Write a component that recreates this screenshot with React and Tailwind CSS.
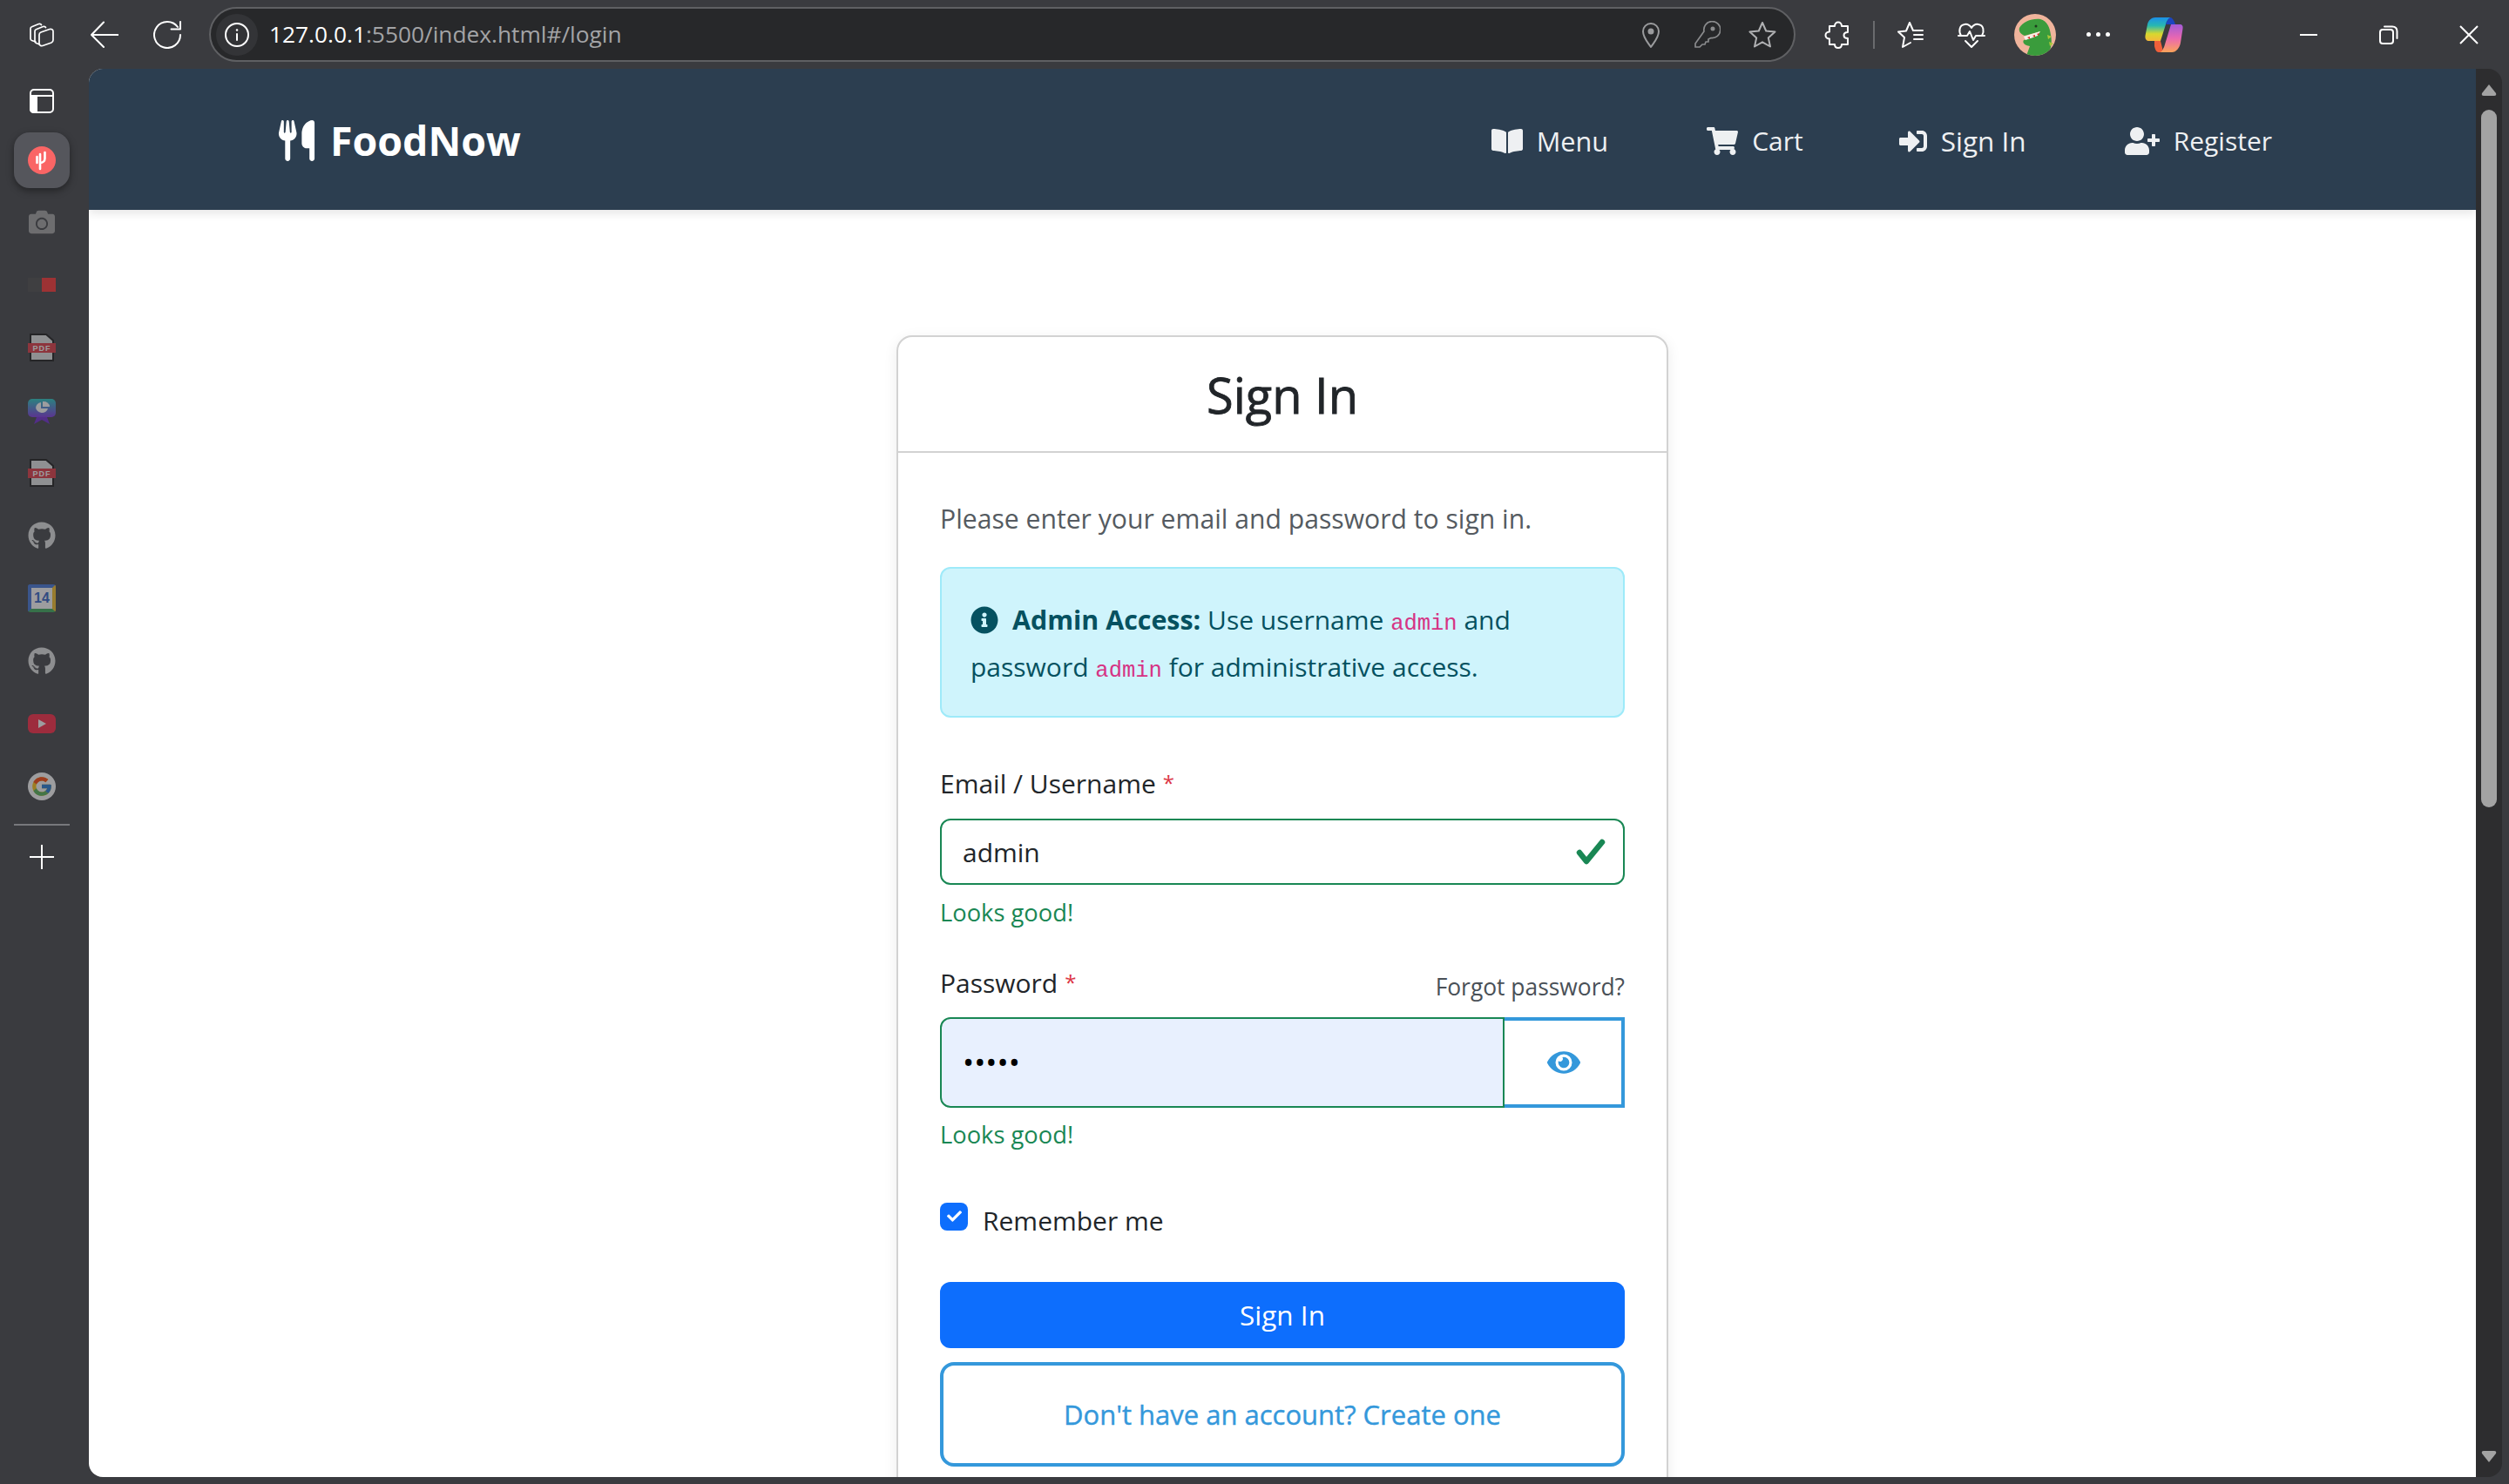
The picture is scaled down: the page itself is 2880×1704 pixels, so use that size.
import {
  FaBookOpen, FaCamera, FaCheck, FaEye, FaGithub, FaInfoCircle, FaShoppingCart,
  FaSignInAlt, FaUserPlus,
} from 'react-icons/fa'
import { FaUtensils } from 'react-icons/fa6'
import { FcGoogle } from 'react-icons/fc'

const Line = ({ size = 32, box = 32, children, className = '' }) => (
  <svg
    width={size}
    height={size}
    viewBox={`0 0 ${box} ${box}`}
    fill="none"
    stroke="currentColor"
    strokeWidth="2"
    strokeLinecap="round"
    strokeLinejoin="round"
    className={className}
  >
    {children}
  </svg>
)

const Cell = ({ className = '', children }) => (
  <div className={`flex h-[64px] w-[64px] shrink-0 items-center justify-center ${className}`}>{children}</div>
)

const Copilot = () => (
  <svg width="44" height="42" viewBox="0 0 44 42">
    <defs>
      <linearGradient id="cpLeft" x1="0" y1="0" x2="0" y2="1">
        <stop offset="0" stopColor="#1b8fe8" />
        <stop offset="0.35" stopColor="#28b8b0" />
        <stop offset="0.7" stopColor="#d8d82e" />
        <stop offset="1" stopColor="#f5b83a" />
      </linearGradient>
      <linearGradient id="cpRight" x1="0" y1="0" x2="0" y2="1">
        <stop offset="0" stopColor="#a35bd8" />
        <stop offset="0.5" stopColor="#ea68b0" />
        <stop offset="1" stopColor="#fba45a" />
      </linearGradient>
    </defs>
    <path d="M12 1 H30 C27 2 25 5 24 9 L18 28 H5 C2 28 0 26 0.5 22 L3 9 C4 4 8 1 12 1 Z" fill="url(#cpLeft)" />
    <path d="M30 1 C33 3 34 6 35 9 L28 9 L24 9 C25 5 27 2 30 1 Z" fill="#1c44c0" />
    <path d="M30 9 H40 C43 9 44 11 43.5 14 L41 30 C40 36 36 41 31 41 H16 C20 40 22 36 23 32 Z" fill="url(#cpRight)" />
    <path d="M11 28 H18 L20 36 C21 39 19 41 16 41 C13 41 12 38 11 34 Z" fill="#f0603a" />
  </svg>
)

const Dino = () => (
  <div className="h-[48px] w-[48px] shrink-0 overflow-hidden rounded-full bg-[#f0b49c]">
    <svg width="48" height="48" viewBox="0 0 48 48">
      <path d="M6 16 C10 9 20 5 30 6 C38 8 41 16 42 24 C44 33 42 42 38 48 H14 L18 37 C12 36 9 33 11 30 L22 27 L30 20 L12 25 C7 23 5 20 6 16 Z" fill="#3a9c3c" />
      <path d="M11 26 L30 20 L27 25 L13 30 Z" fill="#f6f0e8" />
      <path d="M15 27 l3 -1 l0 3 Z M21 25 l3 -1 l0 3 Z M26 23 l3 -1 l-1 3 Z" fill="#d8322a" />
      <circle cx="25" cy="14" r="1.5" fill="#1d3a1e" />
      <path d="M38 24 l5 2 l-4 3 Z M40 32 l5 2 l-4 3 Z" fill="#a8c83a" />
    </svg>
  </div>
)

const Toolbar = () => (
  <div className="flex h-[79px] shrink-0 items-center text-white">
    <div className="ml-[12px] flex">
      <div className="flex h-[64px] w-[72px] items-center justify-center">
        <Line>
          <path d="M9 24 L4.5 22.5 C3.5 22 3 21.500 3 20.500 V9 C3 8 3.500 7 4.500 6.700 L12.500 3.500 C14 3 15 3.500 15.500 4.500" strokeWidth="1.7" />
          <path d="M13.500 27 L9.500 25.500 C8.500 25 8 24.500 8 23.500 V12 C8 11 8.500 10 9.500 9.700 L17.500 6.500 C19 6 20 6.500 20.500 7.500" strokeWidth="1.7" />
          <path d="M13 16 C13 14.500 13.700 13.500 15 13 L25 9.500 C27 9 29 10 29 12 V22 C29 23.500 28 24.500 27 25 L17 28.500 C15 29 13 28 13 26 Z" strokeWidth="1.7" />
        </Line>
      </div>
      <div className="flex h-[64px] w-[72px] items-center justify-center">
        <Line>
          <path d="M32 16 H1 M15 1.500 L1 16 L15 30" />
        </Line>
      </div>
      <div className="flex h-[64px] w-[72px] items-center justify-center">
        <Line>
          <path d="M28 7 A15 15 0 1 0 31 16" />
          <path d="M31 1 V9.500 H20.500" />
        </Line>
      </div>
    </div>

    <div className="ml-[12px] flex h-[63px] w-[1821px] shrink-0 items-center rounded-full border-2 border-[#5f6063] bg-[#27282a]">
      <div className="ml-[6px] flex h-[48px] w-[48px] shrink-0 items-center justify-center rounded-full bg-[#333437]">
        <Line size={28} box={28}>
          <circle cx="14" cy="14" r="13" />
          <path d="M14 13 V20" />
          <path d="M14 8.500 V8.600" strokeWidth="2.500" />
        </Line>
      </div>
      <div className="ml-[13px] flex-1 whitespace-nowrap pt-[1px] text-[26.3px] text-[#a3a4a6]">
        <span className="text-white">127.0.0.1</span>:5500/index.html#/login
      </div>
      <Cell className="text-[#9a9b9d]">
        <Line>
          <path d="M16 30 C12 24 7 19 7 12 A9 9 0 0 1 25 12 C25 19 20 24 16 30 Z" />
          <circle cx="16" cy="12" r="2.500" fill="currentColor" />
        </Line>
      </Cell>
      <Cell className="text-[#8a8b8d]">
        <Line>
          <path d="M13 12 A9.500 9.500 0 1 1 21 19.500 L18 21 V24 H15 L14 27 H11 L8 30 L3 30 L3 26 Z" strokeWidth="1.700" />
          <circle cx="23" cy="9" r="1.500" fill="currentColor" />
        </Line>
      </Cell>
      <Cell className="mr-[4px] text-[#b0b1b3]">
        <Line>
          <path d="M16 2 L20.200 11.500 L30.500 12.500 L22.800 19.400 L25 29.500 L16 24.300 L7 29.500 L9.200 19.400 L1.500 12.500 L11.800 11.500 Z" />
        </Line>
      </Cell>
    </div>

    <Cell className="ml-[17px]">
      <Line>
        <path d="M12 6 C12 3 14 1.500 16 1.500 C18 1.500 20 3 20 6 H27 V13 C24 13 22.500 14.500 22.500 16.500 C22.500 18.500 24 20 27 20 V27 H20 C20 30 18 31 16 31 C14 31 12 30 12 27 H6 V20.500 C3 20.500 1.500 18.500 1.500 16.500 C1.500 14.500 3 12.500 6 12.500 V6 Z" />
      </Line>
    </Cell>
    <div className="ml-[8px] h-[32px] w-[2px] shrink-0 bg-[#6a6b6e]" />
    <Cell className="ml-[9px]">
      <Line>
        <path d="M15 2 L19 11 H30 M11 11.500 L2 12.500 L9 19 L7 30 L16 25 M11 11.500 L15 2" />
        <path d="M20 16 H30 M20 21 H30" />
      </Line>
    </Cell>
    <Cell className="ml-[6px]">
      <Line>
        <path d="M4 17 C1 12 2 5 8 4 C12 3 14 5 16 8 C18 5 20 3 24 4 C30 5 31 12 28 17" />
        <path d="M1 17 H11 L14 12 L18 22 L21 17 H31" />
        <path d="M9 23 L16 30 L23 23" />
      </Line>
    </Cell>
    <Cell className="ml-[9px]">
      <Dino />
    </Cell>
    <Cell className="ml-[8px] gap-[6px]">
      <div className="h-[5px] w-[5px] rounded-full bg-white" />
      <div className="h-[5px] w-[5px] rounded-full bg-white" />
      <div className="h-[5px] w-[5px] rounded-full bg-white" />
    </Cell>
    <Cell className="ml-[12px]">
      <Copilot />
    </Cell>

    <div className="ml-auto flex">
      <div className="flex h-[64px] w-[92px] items-center justify-center">
        <div className="h-[2px] w-[20px] bg-white" />
      </div>
      <div className="flex h-[64px] w-[92px] items-center justify-center">
        <Line size={22} box={22}>
          <rect x="1" y="5" width="15" height="16" rx="3" />
          <path d="M6 1.500 H15 C19 1.500 20.500 3 20.500 7 V15" />
        </Line>
      </div>
      <div className="flex h-[64px] w-[92px] items-center justify-center">
        <Line size={22} box={22}>
          <path d="M1 1 L21 21 M21 1 L1 21" strokeLinecap="butt" />
        </Line>
      </div>
    </div>
  </div>
)

const PdfIcon = () => (
  <svg width="32" height="32" viewBox="0 0 32 32">
    <path d="M3 1 H21 L29 8 V31 H3 Z" fill="#e4e4e4" stroke="#111" strokeWidth="2" />
    <rect x="0" y="11" width="32" height="11" fill="#e0303c" />
    <text x="16" y="20" textAnchor="middle" fontSize="9" fontWeight="700" fontFamily="Liberation Sans" fill="#fff" letterSpacing="1">PDF</text>
  </svg>
)

const SideCell = ({ children }) => (
  <div className="flex h-[72px] w-[64px] items-center justify-center opacity-50">{children}</div>
)

const Sidebar = () => (
  <div className="flex w-[102px] shrink-0 flex-col pl-[16px] pt-[1px]">
    <div className="flex h-[72px] w-[64px] items-center justify-center text-white">
      <svg width="28" height="28" viewBox="0 0 28 28" fill="none" stroke="currentColor" strokeWidth="2">
        <rect x="1" y="1" width="26" height="26" rx="4" />
        <path d="M1 8 H27" />
        <path d="M1 8 H8 V27 H5 C2 27 1 26 1 23 Z" fill="currentColor" />
      </svg>
    </div>
    <div className="flex h-[64px] w-[64px] items-center justify-center rounded-[18px] bg-[#55565c] shadow-[0_3px_8px_rgba(0,0,0,0.4)]">
      <svg width="32" height="32" viewBox="0 0 32 32">
        <circle cx="16" cy="16" r="16" fill="#fa6565" />
        <path d="M10.500 12 V19 M14 9 V26 M19.500 7 V14 C19.500 17 17 19 14 19" fill="none" stroke="#fff" strokeWidth="2.600" strokeLinecap="round" />
      </svg>
    </div>
    <div className="mt-[3px] flex flex-col">
      <SideCell><FaCamera size={30} color="#a0a0a0" /></SideCell>
      <SideCell>
        <div className="flex">
          <div className="h-[16px] w-[16px] bg-[#444]" />
          <div className="h-[16px] w-[16px] bg-[#ff2a2a]" />
        </div>
      </SideCell>
      <SideCell><PdfIcon /></SideCell>
      <SideCell>
        <svg width="32" height="32" viewBox="0 0 32 32">
          <defs>
            <linearGradient id="pieBg" x1="0" y1="0" x2="0" y2="1">
              <stop offset="0" stopColor="#1fc8c0" />
              <stop offset="1" stopColor="#7a2fe0" />
            </linearGradient>
          </defs>
          <path d="M10 24 L7 32 L16 27 L25 32 L22 24 Z" fill="#6a22d0" />
          <rect x="0" y="3" width="32" height="21" rx="5" fill="url(#pieBg)" />
          <path d="M15 7 A7 6 0 1 0 23 14 H15 Z" fill="#fff" />
          <path d="M17 6 A7 6 0 0 1 25 12 H17 Z" fill="#fff" />
        </svg>
      </SideCell>
      <SideCell><PdfIcon /></SideCell>
      <SideCell><FaGithub size={32} color="#e0e0e0" /></SideCell>
      <SideCell>
        <div className="flex h-[32px] w-[32px] items-center justify-center rounded-[3px] border-[4px] border-t-[#3a6fd8] border-r-[#f5bd1f] border-b-[#34a853] border-l-[#3a6fd8] bg-white font-['Liberation_Sans',sans-serif] text-[16px] font-bold leading-none text-[#2a5bc4]">14</div>
      </SideCell>
      <SideCell><FaGithub size={32} color="#e0e0e0" /></SideCell>
      <SideCell>
        <div className="flex h-[22px] w-[32px] items-center justify-center rounded-[6px] bg-[#ff1f3c]">
          <svg width="10" height="10" viewBox="0 0 10 10"><path d="M1 0 L10 5 L1 10 Z" fill="#fff" /></svg>
        </div>
      </SideCell>
      <SideCell>
        <div className="flex h-[32px] w-[32px] items-center justify-center rounded-full bg-white">
          <FcGoogle size={26} />
        </div>
      </SideCell>
    </div>
    <div className="mt-[7px] h-[2px] w-[64px] bg-[#77787c]" />
    <div className="flex h-[72px] w-[64px] items-center justify-center text-white">
      <svg width="28" height="28" viewBox="0 0 28 28" stroke="currentColor" strokeWidth="2"><path d="M0 14 H28 M14 0 V28" /></svg>
    </div>
  </div>
)

const NavLink = ({ icon, label, textClass = 'text-[30px]', className = '' }) => (
  <a className={`flex items-center gap-[16px] leading-[54px] text-[#eef0f2] ${className}`}>
    {icon}
    <span className={textClass}>{label}</span>
  </a>
)

const Navbar = () => (
  <nav className="relative z-10 flex h-[162px] shrink-0 items-center bg-[#2c3e50] pl-[215px] pr-[234px] pt-[3px] text-white shadow-[0_4px_10px_rgba(0,0,0,0.1)]">
    <a className="flex items-center gap-[15px] text-[46.5px] font-bold leading-none">
      <FaUtensils size={47} />
      <span>FoodNow</span>
    </a>
    <div className="ml-auto flex items-center gap-[110px]">
      <NavLink icon={<FaBookOpen size={36} />} label="Menu" textClass="text-[30.7px]" />
      <NavLink icon={<FaShoppingCart size={36} />} label="Cart" className="ml-[3px]" />
      <NavLink icon={<FaSignInAlt size={32} />} label="Sign In" textClass="text-[31.5px]" />
      <NavLink icon={<FaUserPlus size={40} />} label="Register" className="ml-[3px]" />
    </div>
  </nav>
)

const Req = () => <span className="ml-[8px] align-[3px] text-[24px] text-[#dc3545]">*</span>
const Code = ({ children }) => <code className="font-['Liberation_Mono',monospace] text-[25.5px] leading-none text-[#d63384]">{children}</code>

const Feedback = ({ className = 'mt-[8px]' }) => <div className={`${className} text-[27.3px] leading-[48px] text-[#198754]`}>Looks good!</div>

const ValidCheck = () => (
  <svg width="34" height="30" viewBox="0 0 34 30" fill="none" stroke="#198754" strokeWidth="6.500" strokeLinecap="round" strokeLinejoin="round">
    <path d="M4 16 L12 26 L30 4" />
  </svg>
)

const LoginCard = () => (
  <div className="mx-auto mt-[144px] w-[886px] rounded-[18px] border-2 border-[#d2d2d2] bg-white shadow-[0_4px_16px_rgba(0,0,0,0.08)]">
    <div className="flex h-[133px] items-center justify-center border-b-2 border-[#d2d2d2]">
      <h1 className="text-[56px] font-medium leading-none text-[#212529] [-webkit-text-stroke:0.8px_#212529]">Sign In</h1>
    </div>
    <div className="px-[48px] pt-[49px]">
      <p className="text-[30.15px] leading-[54px] text-[#555b61]">Please enter your email and password to sign in.</p>

      <div className="mt-[28px] h-[173px] rounded-[12px] border-2 border-[#9eeaf9] bg-[#cff4fc] px-[33px] py-[32px] text-[30px] leading-[54px] text-[#055160]">
        <FaInfoCircle size={32} className="mr-[16px] inline-block align-[-5px]" />
        <strong className="text-[30.4px] font-bold">Admin Access:</strong> Use username <Code>admin</Code> and password <Code>admin</Code> for administrative access.
      </div>

      <label className="mt-[48px] block text-[30px] leading-[54px] text-[#212529]">
        Email / Username<Req />
      </label>
      <div className="mt-[13px] flex h-[76px] items-center rounded-[12px] border-2 border-[#198754] bg-white pl-[24px] pr-[20px]">
        <input readOnly value="admin" className="min-w-0 flex-1 bg-transparent text-[30px] text-[#212529] outline-none" />
        <ValidCheck />
      </div>
      <Feedback />

      <div className="mt-[29px] flex h-[54px] items-center justify-between">
        <label className="text-[30px] leading-[54px] text-[#212529]">
          Password<Req />
        </label>
        <a className="mt-[10px] text-[26.4px] leading-[48px] text-[#495057]">Forgot password?</a>
      </div>
      <div className="mt-[13px] flex h-[104px]">
        <div className="flex flex-1 items-center rounded-l-[12px] border-2 border-[#198754] bg-[#e8f0fe] pl-[24px]">
          <input readOnly type="password" value="admin" className="min-w-0 flex-1 bg-transparent text-[35px] text-black outline-none" />
        </div>
        <button className="flex w-[138px] items-center justify-center border-[4px] border-l-0 border-[#3498db] pl-[2px] text-[#3498db]">
          <FaEye size={38} />
        </button>
      </div>
      <Feedback className="mt-[7px]" />

      <div className="mt-[48px] flex h-[54px] items-center gap-[17px]">
        <div className="-mt-[11px] flex h-[32px] w-[32px] items-center justify-center rounded-[8px] bg-[#0d6efd] text-white">
          <FaCheck size={17} />
        </div>
        <span className="text-[30px] leading-[54px] text-[#212529]">Remember me</span>
      </div>

      <button className="mt-[43px] block h-[76px] w-full rounded-[12px] bg-[#0d6efd] text-[31.5px] text-white">Sign In</button>
      <button className="mt-[16px] block h-[120px] w-full rounded-[16px] border-[4px] border-[#3498db] text-[31px] font-medium text-[#3498db] [-webkit-text-stroke:0.4px_#3498db]">
        Don&apos;t have an account? Create one
      </button>
      <div className="h-[80px]" />
    </div>
  </div>
)

const Scrollbar = () => (
  <div className="flex w-[30px] shrink-0 flex-col items-center rounded-r-[16px] bg-[#2d2d2f] pt-[17px]">
    <svg width="18" height="14" viewBox="0 0 18 14"><path d="M9 1 L17 11 Q18 14 15 14 H3 Q0 14 1 11 Z" fill="#a3a3a3" /></svg>
    <div className="mt-[16px] h-[801px] w-[18px] rounded-full bg-[#a3a3a3]" />
    <svg className="mb-[16px] mt-auto" width="18" height="14" viewBox="0 0 18 14"><path d="M9 13 L17 3 Q18 0 15 0 H3 Q0 0 1 3 Z" fill="#a3a3a3" /></svg>
  </div>
)

export default function App() {
  return (
    <div className="flex h-[1704px] w-[2880px] flex-col overflow-hidden bg-[#3a3b3f] font-['Open_Sans',sans-serif]">
      <Toolbar />
      <div className="flex h-[1617px] shrink-0 pr-[8px]">
        <Sidebar />
        <div className="flex min-w-0 flex-1 flex-col overflow-hidden rounded-l-[16px] bg-white">
          <Navbar />
          <LoginCard />
        </div>
        <Scrollbar />
      </div>
    </div>
  )
}
